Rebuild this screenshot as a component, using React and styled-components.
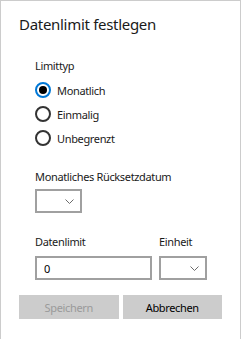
import React, { useState } from 'react'
import styled, { createGlobalStyle } from 'styled-components'

const GlobalStyle = createGlobalStyle`
  html, body {
    margin: 0;
    padding: 0;
    background: #ffffff;
  }
  body {
    font-family: 'Noto Sans', 'Open Sans', sans-serif;
    color: #000000;
  }
`

const Dialog = styled.div`
  box-sizing: border-box;
  width: 241px;
  height: 340px;
  border: 1px solid #cccccc;
  padding: 12px 18px 0 18px;
  display: flex;
  flex-direction: column;
`

const Title = styled.h1`
  margin: 0;
  font-size: 15px;
  font-weight: 400;
  line-height: 22px;
  letter-spacing: -0.3px;
  color: #1a1a1a;
`

const Body = styled.div`
  padding-left: 16px;
  display: flex;
  flex-direction: column;
`

const Label = styled.div`
  font-size: 11px;
  line-height: 16px;
  letter-spacing: -0.35px;
  color: #1a1a1a;
  margin-top: ${p => p.$top || 0}px;
`

const RadioGroup = styled.div`
  display: flex;
  flex-direction: column;
  gap: 8px;
  margin-top: 8px;
`

const RadioRow = styled.label`
  display: flex;
  align-items: center;
  gap: 6px;
  height: 16px;
  font-size: 11px;
  letter-spacing: -0.35px;
  color: #1a1a1a;
  cursor: pointer;
`

const Circle = styled.span`
  box-sizing: border-box;
  width: 16px;
  height: 16px;
  border-radius: 50%;
  border: 2px solid ${p => (p.$checked ? '#0078d7' : '#333333')};
  display: flex;
  align-items: center;
  justify-content: center;

  &::after {
    content: '';
    width: 8px;
    height: 8px;
    border-radius: 50%;
    background: #000000;
    display: ${p => (p.$checked ? 'block' : 'none')};
  }
`

const Select = styled.div`
  box-sizing: border-box;
  width: ${p => p.$width}px;
  height: 24px;
  border: 2px solid #a0a0a0;
  background: #ffffff;
  display: flex;
  align-items: center;
  justify-content: flex-end;
  padding-right: 6px;
  margin-top: ${p => p.$top || 0}px;
`

const Row = styled.div`
  display: flex;
  gap: 7px;
  margin-top: ${p => p.$top || 0}px;
`

const Field = styled.div`
  display: flex;
  flex-direction: column;
  gap: 6px;
`

const Input = styled.input`
  box-sizing: border-box;
  width: 117px;
  height: 24px;
  border: 2px solid #a0a0a0;
  padding: 0 7px;
  font-family: inherit;
  font-size: 11px;
  color: #000000;
  outline: none;
`

const Buttons = styled.div`
  display: grid;
  grid-template-columns: 1fr 1fr;
  gap: 4px;
  margin-top: 15px;
`

const Button = styled.button`
  height: 24px;
  border: none;
  background: #cccccc;
  font-family: inherit;
  font-size: 11px;
  letter-spacing: -0.35px;
  color: ${p => (p.disabled ? '#9a9a9a' : '#000000')};
  padding: 0;
`

function Chevron () {
  return (
    <svg width='9' height='5' viewBox='0 0 9 5'>
      <path d='M0.5 0.5 L4.5 4.5 L8.5 0.5' fill='none' stroke='#6b6b6b' strokeWidth='1' />
    </svg>
  )
}

const options = ['Monatlich', 'Einmalig', 'Unbegrenzt']

export default function App () {
  const [type, setType] = useState('Monatlich')
  return (
    <>
      <GlobalStyle />
      <Dialog>
        <Title>Datenlimit festlegen</Title>
        <Body>
          <Label $top={23}>Limittyp</Label>
          <RadioGroup>
            {options.map(opt => (
              <RadioRow key={opt} onClick={() => setType(opt)}>
                <Circle $checked={type === opt} />
                {opt}
              </RadioRow>
            ))}
          </RadioGroup>
          <Label $top={23}>Monatliches Rücksetzdatum</Label>
          <Select $width={47} $top={4}><Chevron /></Select>
          <Row $top={21}>
            <Field>
              <Label>Datenlimit</Label>
              <Input defaultValue='0' />
            </Field>
            <Field>
              <Label>Einheit</Label>
              <Select $width={48}><Chevron /></Select>
            </Field>
          </Row>
        </Body>
        <Buttons>
          <Button disabled>Speichern</Button>
          <Button>Abbrechen</Button>
        </Buttons>
      </Dialog>
    </>
  )
}
